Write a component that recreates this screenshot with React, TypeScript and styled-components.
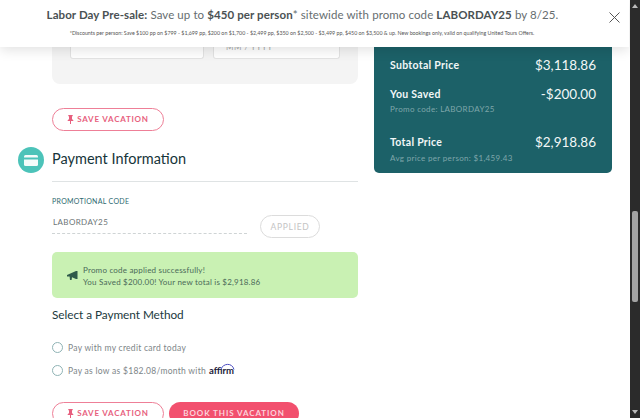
import React from "react";
import styled, { createGlobalStyle } from "styled-components";

const Global = createGlobalStyle`
  html, body { margin: 0; padding: 0; height: 100%; overflow: hidden; background: #fff; }
  #root { height: 100%; }
  * { box-sizing: border-box; }
`;
const Screen = styled.div`
  display: flex; width: 640px; height: 418px; overflow: hidden; position: relative;
  font-family: "Lato", "Liberation Sans", sans-serif; color: #4a5a5c;
`;
const Page = styled.div`
  flex: 1; display: flex; align-items: flex-start; padding-left: 52px; min-width: 0;
`;
const Left = styled.div`
  width: 306px; flex: none; display: flex; flex-direction: column;
`;
const Right = styled.div`
  width: 238px; flex: none; margin-left: 16px;
`;
const GrayPanel = styled.div`
  height: 84px; background: #f4f4f4; border-radius: 0 0 8px 8px; padding: 0 18px; display: flex; gap: 9px; align-items: flex-start;
`;
const Field = styled.div<{ $w: number }>`
  width: ${p => p.$w}px; height: 59px; background: #fff; border: 1px solid #e3e3e3; border-top: none; border-radius: 0 0 3px 3px;
  display: flex; align-items: flex-end; padding: 0 0 6px 12px; font-size: 8px; color: #a9a9a9; letter-spacing: .5px;
`;
const Outline = styled.button`
  width: 112px; height: 23px; border: 1px solid #ee7f97; border-radius: 12px; background: #fff; color: #e75f7e;
  display: flex; align-items: center; justify-content: center; gap: 3px; padding: 0 0 1px; font: 700 8px "Lato", sans-serif; letter-spacing: .75px;
`;
const SaveRow = styled.div`
  margin-top: 24px;
`;
const Heading = styled.div`
  margin: 15px 0 0 -34px; display: flex; align-items: center; gap: 8px; height: 28px;
`;
const IconCircle = styled.div`
  width: 26px; height: 26px; border-radius: 50%; background: #4cc3b9; display: flex; align-items: center; justify-content: center; flex: none;
`;
const HeadingText = styled.h2`
  margin: 0 0 4px; font: 400 14.5px "Lato", sans-serif; letter-spacing: 0; color: #16353a;
`;
const Divider = styled.div`
  height: 1px; background: #dfe3e4; margin-top: 7px;
`;
const PromoLabel = styled.div`
  margin-top: 14px; font: 400 7px/10px "Lato", sans-serif; letter-spacing: .3px; color: #2d6a70;
`;
const PromoRow = styled.div`
  display: flex; gap: 13px; margin-top: 5px; align-items: flex-start;
`;
const PromoInput = styled.div`
  width: 195px; height: 23px; border-bottom: 1px dashed #cfd4d5; padding: 6px 0 0 1px; font-size: 8px; line-height: 10px; letter-spacing: .4px; color: #6d7576;
`;
const Applied = styled.button`
  margin-top: 4px; width: 60px; height: 23px; border: 1px solid #dcdcdc; border-radius: 12px; background: #fff; color: #c4c4c4; padding: 0;
  font: 400 8.5px "Lato", sans-serif; letter-spacing: .7px;
`;
const Success = styled.div`
  margin-top: 14px; height: 46px; border-radius: 5px; background: #c9f1b3; display: flex; align-items: center; gap: 5px; padding: 1px 0 0 15px;
`;
const SuccessText = styled.div`
  font-size: 8px; line-height: 12px; letter-spacing: .2px; color: #4a6a58;
`;
const Sub = styled.h3`
  margin: 9px 0 0; font: 400 11.8px/16px "Lato", sans-serif; letter-spacing: -.05px; color: #21393d;
`;
const Radios = styled.div`
  margin-top: 19px; display: flex; flex-direction: column; gap: 12px;
`;
const RadioRow = styled.label`
  display: flex; align-items: center; gap: 5px; height: 11px; font-size: 8.5px; letter-spacing: .28px; color: #7d8588;
`;
const Radio = styled.span`
  width: 11px; height: 11px; border-radius: 50%; border: 1px solid #8fb3b5; flex: none; background: #fff;
`;
const Affirm = styled.span`
  position: relative; font: 700 9.5px "Lato", sans-serif; color: #1b1b3a; margin-left: -2px; letter-spacing: 0;
`;
const AffirmArc = styled.svg`
  position: absolute; right: -1px; top: -3px;
`;
const Actions = styled.div`
  display: flex; gap: 5px; margin-top: 26px;
`;
const Book = styled.button`
  width: 130px; height: 23px; border: none; border-radius: 12px; background: #f2506e; color: #fbd3dc; padding: 0 0 1px;
  font: 700 8px "Lato", sans-serif; letter-spacing: .9px;
`;
const Card = styled.div`
  height: 173px; background: #1c6168; border-radius: 0 0 5px 5px; padding: 57px 16px 0; color: #f2f7f7; display: flex; flex-direction: column;
`;
const Line = styled.div<{ $top: number }>`
  display: flex; justify-content: space-between; align-items: center; margin-top: ${p => p.$top}px; height: 16px;
`;
const LineLabel = styled.div`
  font: 700 10.5px "Lato", sans-serif; letter-spacing: .3px;
`;
const Price = styled.div`
  font: 400 13.5px "Lato", sans-serif; letter-spacing: 0;
`;
const Fine = styled.div`
  font-size: 8px; line-height: 10px; letter-spacing: .33px; color: #7fa6aa; margin-top: 2px;
`;
const AvgFine = styled(Fine)`
  margin-top: 3px;
`;
const Banner = styled.div`
  position: absolute; left: 0; top: 0; width: 629px; height: 47px; background: #fff; box-shadow: 0 3px 12px rgba(0,0,0,.12);
  display: flex; flex-direction: column; align-items: center;
`;
const BannerTitle = styled.div`
  margin: 7px 0 0 -24px; font: 400 11.5px/16px "Lato", sans-serif; letter-spacing: .09px; color: #666d6f; white-space: nowrap;
  b { font-weight: 700; color: #4a5153; }
`;
const BannerFine = styled.div`
  margin: 7px 0 0 -25px; font-size: 5.3px; line-height: 7px; color: #555; white-space: nowrap;
`;
const Close = styled.svg`
  position: absolute; left: 609px; top: 12px;
`;
const Scrollbar = styled.div`
  position: absolute; right: 0; top: 0; width: 10px; height: 418px; background: #2b2b2b;
`;
const Thumb = styled.div`
  position: absolute; left: 2px; top: 211px; width: 6px; height: 91px; border-radius: 2px; background: #a3a3a3;
`;
const Arrow = styled.div<{ $down?: boolean }>`
  position: absolute; left: 2px; ${p => p.$down ? "bottom: 4px; border-top: 4px solid #bbb;" : "top: 4px; border-bottom: 4px solid #bbb;"}
  border-left: 3px solid transparent; border-right: 3px solid transparent;
`;

const Pin = () => (
  <svg width="7" height="9" viewBox="0 0 7 9" fill="#e75f7e"><path d="M1.3 0h4.4v1L5 1.4V4l1.4 1.4V6H4v3h-1V6H.6v-.6L2 4V1.4L1.3 1z" /></svg>
);

const SaveButton = () => (<Outline><Pin />SAVE VACATION</Outline>);

export default function App() {
  return (
    <Screen>
      <Global />
      <Page>
        <Left>
          <GrayPanel>
            <Field $w={134} />
            <Field $w={127}>MM / YYYY</Field>
          </GrayPanel>
          <SaveRow><SaveButton /></SaveRow>
          <Heading>
            <IconCircle>
              <svg width="14" height="11" viewBox="0 0 14 11"><rect width="14" height="11" rx="1.5" fill="#f4fbfa" /><rect y="2.5" width="14" height="2" fill="#4cc3b9" /></svg>
            </IconCircle>
            <HeadingText>Payment Information</HeadingText>
          </Heading>
          <Divider />
          <PromoLabel>PROMOTIONAL CODE</PromoLabel>
          <PromoRow>
            <PromoInput>LABORDAY25</PromoInput>
            <Applied>APPLIED</Applied>
          </PromoRow>
          <Success>
            <svg width="11" height="9" viewBox="0 0 11 9" fill="#2f5a4a"><path d="M0 4l9-4h1.5v8H9L5 6.200 4.600 9H3l-.4-3.400L0 5.400z" /></svg>
            <SuccessText>Promo code applied successfully!<br />You Saved $200.00! Your new total is $2,918.86</SuccessText>
          </Success>
          <Sub>Select a Payment Method</Sub>
          <Radios>
            <RadioRow><Radio />Pay with my credit card today</RadioRow>
            <RadioRow>
              <Radio />Pay as low as $182.08/month with
              <Affirm>affirm
                <AffirmArc width="15" height="8" viewBox="0 0 15 8" fill="none"><path d="M1 7C3 1.500 12 0 14 7.500" stroke="#4a4ac0" strokeWidth="1" /></AffirmArc>
              </Affirm>
            </RadioRow>
          </Radios>
          <Actions>
            <SaveButton />
            <Book>BOOK THIS VACATION</Book>
          </Actions>
        </Left>
        <Right>
          <Card>
            <Line $top={0}><LineLabel>Subtotal Price</LineLabel><Price>$3,118.86</Price></Line>
            <Line $top={13}><LineLabel>You Saved</LineLabel><Price>-$200.00</Price></Line>
            <Fine>Promo code: LABORDAY25</Fine>
            <Line $top={20}><LineLabel>Total Price</LineLabel><Price>$2,918.86</Price></Line>
            <AvgFine>Avg price per person: $1,459.43</AvgFine>
          </Card>
        </Right>
      </Page>
      <Banner>
        <BannerTitle><b>Labor Day Pre-sale:</b> Save up to <b>$450 per person</b>* sitewide with promo code <b>LABORDAY25</b> by 8/25.</BannerTitle>
        <BannerFine>*Discounts per person: Save $100 pp on $799 - $1,699 pp, $200 on $1,700 - $2,499 pp, $350 on $2,500 - $3,499 pp, $450 on $3,500 &amp; up. New bookings only, valid on qualifying United Tours Offers.</BannerFine>
        <Close width="11" height="11" viewBox="0 0 11 11" stroke="#555" strokeWidth="1" fill="none"><path d="M.5.5l10 10M10.500.5l-10 10" /></Close>
      </Banner>
      <Scrollbar>
        <Arrow />
        <Thumb />
        <Arrow $down />
      </Scrollbar>
    </Screen>
  );
}
